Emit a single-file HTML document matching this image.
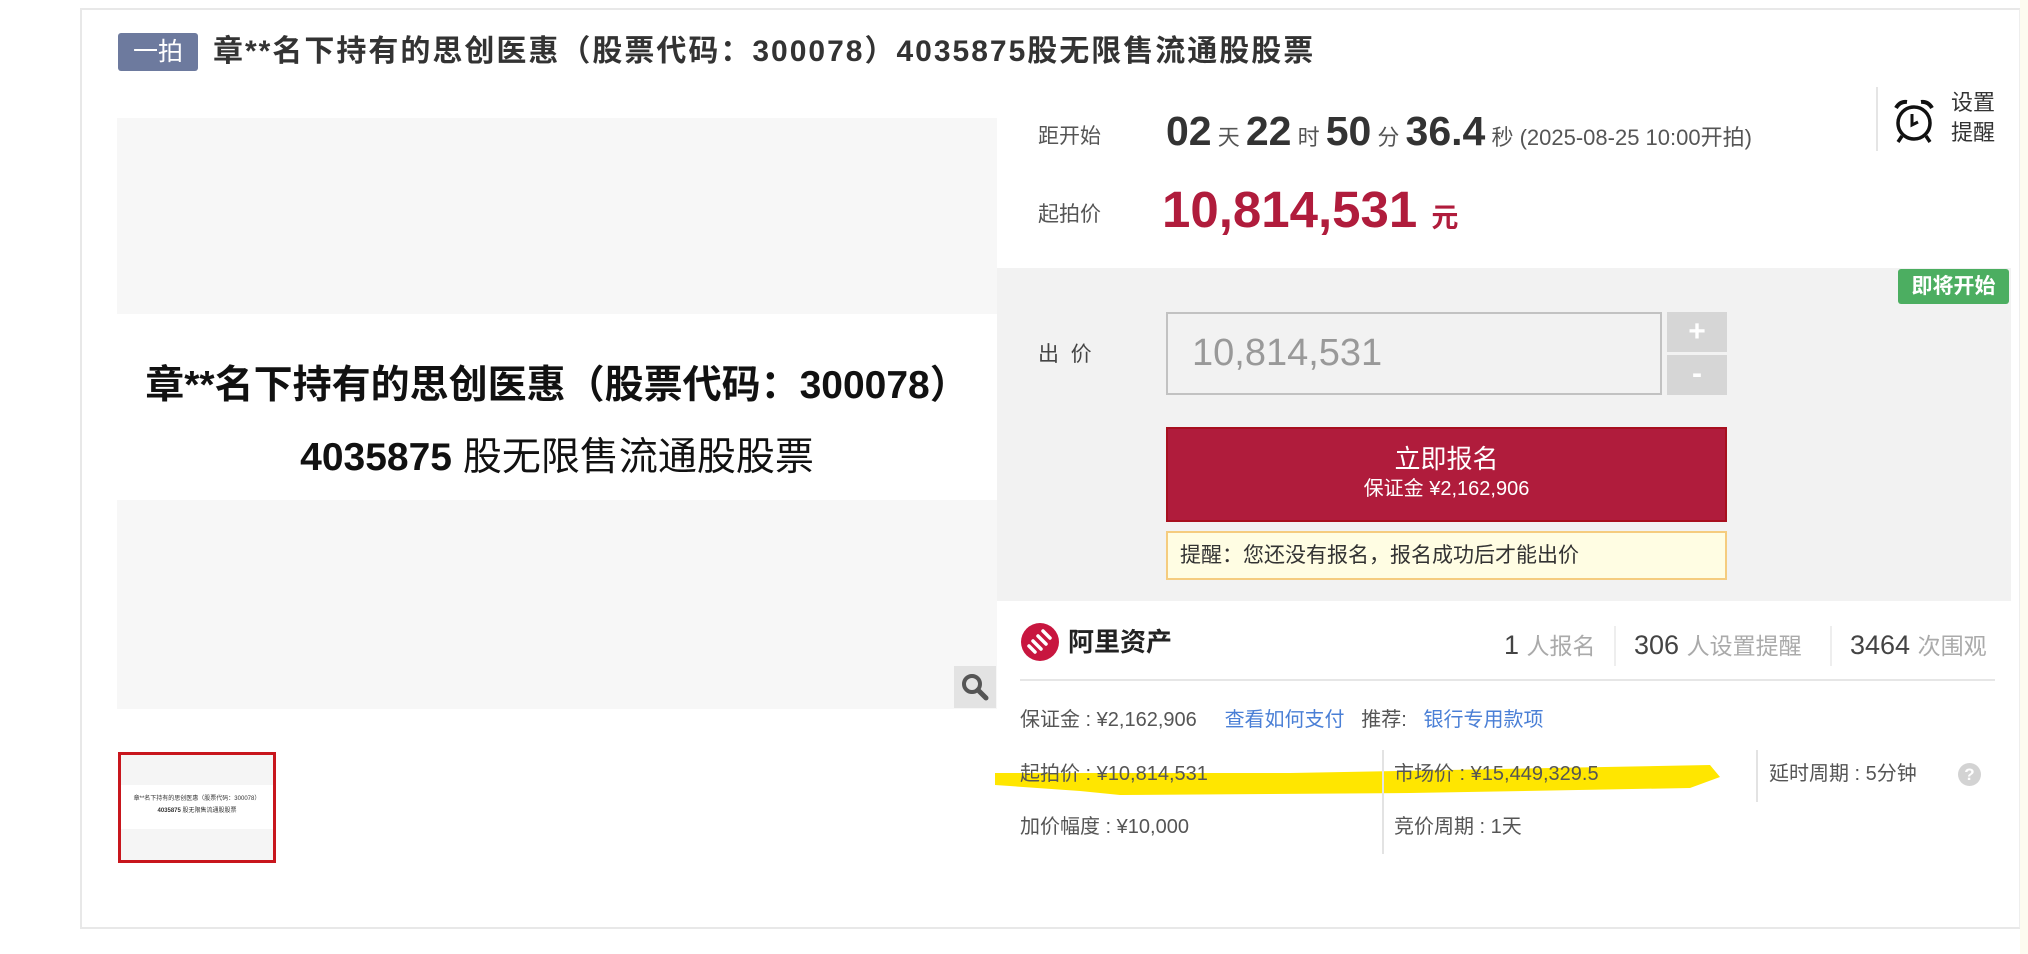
<!DOCTYPE html>
<html><head><meta charset="utf-8"><style>
*{margin:0;padding:0;box-sizing:border-box}
body{width:2028px;height:954px;background:#fff;position:relative;overflow:hidden;font-family:"Liberation Sans","Noto Sans CJK SC",sans-serif;color:#333}
.a{position:absolute;white-space:nowrap}
</style></head><body>
<div class="a" style="left:80px;top:8px;width:1941px;height:921px;border:2px solid #e8e8e8;border-right-color:#eee"></div>
<div class="a" style="left:2020px;top:0;width:8px;height:954px;background:#fdfbf0"></div>

<div class="a" style="left:118px;top:33px;width:80px;height:38px;background:#6d7a9e;border-radius:3px;color:#fff;font-size:25px;line-height:38px;text-align:center">一拍</div>
<div class="a" style="left:213px;top:32px;font-size:30px;letter-spacing:2px;font-weight:bold;line-height:40px;color:#333">章**名下持有的思创医惠（股票代码：300078）4035875股无限售流通股股票</div>

<div class="a" style="left:117px;top:118px;width:880px;height:591px;background:#f7f7f7"></div>
<div class="a" style="left:117px;top:314px;width:880px;height:186px;background:#fff"></div>
<div class="a" style="left:117px;top:354px;width:880px;text-align:center;font-size:39px;font-weight:bold;color:#111">章**名下持有的思创医惠（股票代码：300078）</div>
<div class="a" style="left:117px;top:426px;width:880px;text-align:center;font-size:39px;color:#111"><b>4035875</b> 股无限售流通股股票</div>
<div class="a" style="left:954px;top:666px;width:42px;height:42px;background:#e3e3e3">
<svg width="42" height="42"><circle cx="18" cy="18" r="8" fill="none" stroke="#555" stroke-width="4"/><line x1="24" y1="24" x2="32" y2="32" stroke="#555" stroke-width="5" stroke-linecap="round"/></svg></div>

<div class="a" style="left:118px;top:752px;width:158px;height:111px;border:3px solid #c8161d;background:#f5f5f5">
<div style="position:absolute;left:0;right:0;top:30px;height:44px;background:#fff;font-size:6px;text-align:center;line-height:12px;padding-top:8px">章**名下持有的思创医惠（股票代码：300078）<br><b>4035875</b> 股无限售流通股股票</div></div>

<div class="a" style="left:997px;top:268px;width:1014px;height:333px;background:#f2f2f2"></div>

<div class="a" style="left:1038px;top:120px;font-size:21px;color:#555">距开始</div>
<div class="a" style="left:1166px;top:106px;font-size:41px;font-weight:bold;color:#333;line-height:50px">02<span style="font-size:22px;font-weight:normal;color:#555"> 天 </span>22<span style="font-size:22px;font-weight:normal;color:#555"> 时 </span>50<span style="font-size:22px;font-weight:normal;color:#555"> 分 </span>36.4<span style="font-size:22px;font-weight:normal;color:#555"> 秒 </span><span style="font-size:22px;font-weight:normal;color:#555">(2025-08-25 10:00开拍)</span></div>
<div class="a" style="left:1876px;top:87px;width:2px;height:64px;background:#e5e5e5"></div>
<svg class="a" style="left:1890px;top:96px" width="48" height="50" viewBox="0 0 48 50"><circle cx="24" cy="27" r="16" fill="none" stroke="#111" stroke-width="3.5"/><path d="M6 12 Q10 5 17 6 M42 12 Q38 5 31 6" fill="none" stroke="#111" stroke-width="4"/><path d="M22 18 V29 L28 26" fill="none" stroke="#111" stroke-width="3"/><path d="M12 40 L8 46 M36 40 L40 46" stroke="#111" stroke-width="3.5"/></svg>
<div class="a" style="left:1951px;top:88px;font-size:22px;line-height:30px;color:#333">设置<br>提醒</div>

<div class="a" style="left:1038px;top:198px;font-size:21px;color:#555">起拍价</div>
<div class="a" style="left:1162px;top:180px;font-size:51px;font-weight:bold;color:#b01c3c;line-height:60px">10,814,531 <span style="font-size:27px">元</span></div>

<div class="a" style="left:1898px;top:269px;width:111px;height:35px;background:#4cae61;border-radius:3px;color:#fff;font-size:21px;font-weight:bold;text-align:center;line-height:35px">即将开始</div>

<div class="a" style="left:1038px;top:338px;font-size:21px;color:#444">出&nbsp;&nbsp;价</div>
<div class="a" style="left:1166px;top:312px;width:496px;height:83px;border:2px solid #c2c2c2;background:#f2f2f2;font-size:38px;color:#999;line-height:79px;padding-left:24px">10,814,531</div>
<div class="a" style="left:1667px;top:312px;width:60px;height:40px;background:#d6d6d6;color:#fff;font-size:30px;font-weight:bold;text-align:center;line-height:40px">+</div>
<div class="a" style="left:1667px;top:355px;width:60px;height:40px;background:#d6d6d6;color:#fff;font-size:30px;font-weight:bold;text-align:center;line-height:38px">-</div>

<div class="a" style="left:1166px;top:427px;width:561px;height:95px;background:#b01c3c;border:2px solid #a8101f;color:#fff;text-align:center">
<div style="font-size:26px;margin-top:14px;line-height:32px">立即报名</div>
<div style="font-size:20px;line-height:28px">保证金 ¥2,162,906</div></div>
<div class="a" style="left:1166px;top:531px;width:561px;height:49px;background:#fffde3;border:2px solid #f5cc7f;font-size:21px;line-height:45px;padding-left:12px;color:#333">提醒：您还没有报名，报名成功后才能出价</div>

<svg class="a" style="left:1020px;top:622px" width="40" height="40" viewBox="0 0 40 40"><circle cx="20" cy="20" r="19" fill="#c8163f"/><g stroke="#fff" stroke-width="3.5" stroke-linecap="round"><line x1="9" y1="24" x2="15" y2="30"/><line x1="13" y1="19" x2="21" y2="27"/><line x1="18" y1="14" x2="26" y2="22"/><line x1="23" y1="9" x2="30" y2="16"/></g></svg>
<div class="a" style="left:1068px;top:624px;font-size:26px;font-weight:bold;color:#222;line-height:36px">阿里资产</div>

<div class="a" style="left:1504px;top:627px;font-size:27px;color:#444;line-height:36px">1 <span style="font-size:23px;color:#aaa">人报名</span></div>
<div class="a" style="left:1614px;top:626px;width:2px;height:40px;background:#eee"></div>
<div class="a" style="left:1634px;top:627px;font-size:27px;color:#444;line-height:36px">306 <span style="font-size:23px;color:#aaa">人设置提醒</span></div>
<div class="a" style="left:1830px;top:626px;width:2px;height:40px;background:#eee"></div>
<div class="a" style="left:1850px;top:627px;font-size:27px;color:#444;line-height:36px">3464 <span style="font-size:23px;color:#aaa">次围观</span></div>
<div class="a" style="left:1020px;top:679px;width:975px;height:2px;background:#e6e6e6"></div>

<svg class="a" style="left:990px;top:755px" width="740" height="50"><path d="M5 18 L300 18 L720 10 L730 22 L700 33 L420 38 L130 40 L90 36 L5 30 Z" fill="#ffe600"/></svg>

<div class="a" style="left:1020px;top:706px;font-size:20px;color:#555;line-height:28px">保证金 : ¥2,162,906 &nbsp;&nbsp;&nbsp; <span style="color:#4a7fd6">查看如何支付</span>&nbsp;&nbsp; 推荐: &nbsp;&nbsp;<span style="color:#4a7fd6">银行专用款项</span></div>
<div class="a" style="left:1382px;top:750px;width:2px;height:104px;background:#e3e3e3"></div>
<div class="a" style="left:1756px;top:750px;width:2px;height:52px;background:#e3e3e3"></div>
<div class="a" style="left:1020px;top:760px;font-size:20px;color:#555;line-height:28px">起拍价 : ¥10,814,531</div>
<div class="a" style="left:1394px;top:760px;font-size:20px;color:#555;line-height:28px">市场价 : ¥15,449,329.5</div>
<div class="a" style="left:1769px;top:760px;font-size:20px;color:#555;line-height:28px">延时周期 : 5分钟</div>
<div class="a" style="left:1958px;top:763px;width:23px;height:23px;border-radius:50%;background:#d3d3d3;color:#fff;font-size:17px;font-weight:bold;text-align:center;line-height:23px">?</div>
<div class="a" style="left:1020px;top:813px;font-size:20px;color:#555;line-height:28px">加价幅度 : ¥10,000</div>
<div class="a" style="left:1394px;top:813px;font-size:20px;color:#555;line-height:28px">竞价周期 : 1天</div>
</body></html>
